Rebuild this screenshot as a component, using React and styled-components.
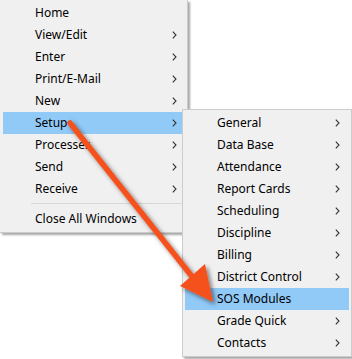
import React from 'react';
import styled, { createGlobalStyle } from 'styled-components';

const GlobalStyle = createGlobalStyle`
  html, body {
    margin: 0;
    padding: 0;
    background: #fff;
  }
  body {
    font-family: "Noto Sans", "Open Sans", sans-serif;
    font-size: 12px;
    color: #000;
  }
`;

const Canvas = styled.div`
  position: relative;
  width: 352px;
  height: 359px;
  overflow: hidden;
  background: #fff;
`;

const Menu = styled.ul`
  list-style: none;
  margin: 0;
  padding: ${props => props.padTop}px 2px 2px ${props => (props.noLeft ? 3 : 2)}px;
  width: ${props => props.width}px;
  box-sizing: border-box;
  background: #f0f0f0;
  border: 1px solid #cccccc;
  border-left: ${props => (props.noLeft ? 'none' : '1px solid #cccccc')};
  border-top: ${props => (props.noTop ? 'none' : '1px solid #cccccc')};
  box-shadow: 2px 2px 2px rgba(0, 0, 0, 0.35);
`;

const SubMenu = styled(Menu)`
  position: absolute;
  left: 182px;
  top: 109px;
`;

const Item = styled.li`
  display: flex;
  align-items: center;
  height: 22px;
  padding-left: ${props => props.indent}px;
  padding-right: ${props => props.right}px;
  background: ${props => (props.active ? '#91c9f7' : 'transparent')};
  white-space: nowrap;
  line-height: 22px;
`;

const Label = styled.span`
  flex: 1;
`;

const Separator = styled.li`
  height: 1px;
  margin: 3px 0 4px ${props => props.indent}px;
  background: #d7d7d7;
`;

const ArrowLayer = styled.svg`
  position: absolute;
  left: 0;
  top: 0;
  pointer-events: none;
`;

const Chevron = () => (
  <svg width="5" height="8" viewBox="0 0 5 8">
    <path d="M0.8 0.6 L4 4 L0.8 7.4" fill="none" stroke="#333" strokeWidth="1.1" />
  </svg>
);

const mainItems = [
  { label: 'Home' },
  { label: 'View/Edit', sub: true },
  { label: 'Enter', sub: true },
  { label: 'Print/E-Mail', sub: true },
  { label: 'New', sub: true },
  { label: 'Setup', sub: true, active: true },
  { label: 'Processes', sub: true },
  { label: 'Send', sub: true },
  { label: 'Receive', sub: true },
  { separator: true },
  { label: 'Close All Windows' },
];

const setupItems = [
  { label: 'General', sub: true },
  { label: 'Data Base', sub: true },
  { label: 'Attendance', sub: true },
  { label: 'Report Cards', sub: true },
  { label: 'Scheduling', sub: true },
  { label: 'Discipline', sub: true },
  { label: 'Billing', sub: true },
  { label: 'District Control', sub: true },
  { label: 'SOS Modules', active: true },
  { label: 'Grade Quick', sub: true },
  { label: 'Contacts', sub: true },
];

const renderItems = (items, indent, right) =>
  items.map((item, i) =>
    item.separator ? (
      <Separator key={`sep-${i}`} indent={indent - 4} />
    ) : (
      <Item key={item.label} indent={indent} right={right} active={item.active}>
        <Label>{item.label}</Label>
        {item.sub && <Chevron />}
      </Item>
    )
  );

const App = () => (
  <>
    <GlobalStyle />
    <Canvas>
      <Menu width={188} padTop={2} noLeft noTop>
        {renderItems(mainItems, 32, 8)}
      </Menu>
      <SubMenu width={170} padTop={2}>
        {renderItems(setupItems, 32, 9)}
      </SubMenu>
      <ArrowLayer width="352" height="359" viewBox="0 0 352 359">
        <defs>
          <filter id="arrowShadow" x="-20%" y="-20%" width="140%" height="140%">
            <feDropShadow dx="2.5" dy="2.5" stdDeviation="2.2" floodColor="#000" floodOpacity="0.5" />
          </filter>
        </defs>
        <g filter="url(#arrowShadow)" fill="#f4511e">
          <line x1="70" y1="123" x2="194" y2="279" stroke="#f4511e" strokeWidth="5.5" strokeLinecap="round" />
          <polygon points="213,302 180,286 205,264" />
        </g>
      </ArrowLayer>
    </Canvas>
  </>
);

export default App;
